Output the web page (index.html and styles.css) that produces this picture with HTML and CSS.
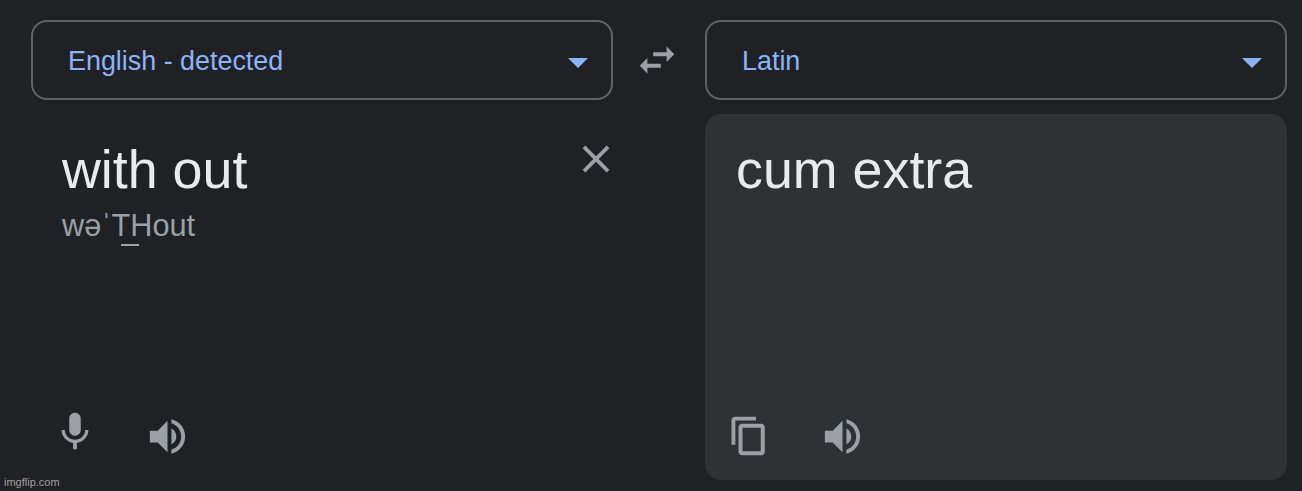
FILE: index.html
```html
<!DOCTYPE html>
<html lang="en">

<head>
    <meta charset="UTF-8">
    <meta name="viewport" content="width=device-width, initial-scale=1.0">
    <title>Translate</title>
    <link rel="stylesheet" href="styles.css">
</head>
<body>
    <main class="translator">
        <div class="languages">
            <div class="language">
                <span>English - detected</span>
                <svg class="caret" viewBox="0 0 20 10"><path d="M0 0h20L10 10z"/></svg>
            </div>
            <div class="swap">
                <svg class="icon" viewBox="0 0 24 24"><path d="M6.99 11L3 15l3.99 4v-3H14v-2H6.99v-3zM21 9l-3.99-4v3H10v2h7.01v3L21 9z"/></svg>
            </div>
            <div class="language">
                <span>Latin</span>
                <svg class="caret" viewBox="0 0 20 10"><path d="M0 0h20L10 10z"/></svg>
            </div>
        </div>
        <div class="panels">
            <section class="panel source">
                <div class="row">
                    <div class="text">with out</div>
                    <svg class="icon close" viewBox="0 0 24 24"><path d="M19 6.41L17.59 5 12 10.59 6.41 5 5 6.41 10.59 12 5 17.59 6.41 19 12 13.41 17.59 19 19 17.59 13.41 12z"/></svg>
                </div>
                <div class="phonetic">wəˈ<span class="digraph">TH</span>out</div>
                <div class="actions">
                    <svg class="icon mic" viewBox="0 0 24 24"><path d="M12 14c1.66 0 2.99-1.34 2.99-3L15 5c0-1.66-1.34-3-3-3S9 3.34 9 5v6c0 1.66 1.34 3 3 3zm5.3-3c0 3-2.54 5.1-5.3 5.1S6.7 14 6.7 11H5c0 3.41 2.72 6.23 6 6.72V21h2v-3.28c3.28-.48 6-3.3 6-6.72h-1.7z"/></svg>
                    <svg class="icon speaker" viewBox="0 0 24 24"><path d="M3 9v6h4l5 5V4L7 9H3zm13.5 3c0-1.77-1.02-3.29-2.5-4.03v8.05c1.48-.73 2.5-2.25 2.5-4.02zM14 3.23v2.06c2.89.86 5 3.54 5 6.71s-2.11 5.85-5 6.71v2.06c4.01-.91 7-4.49 7-8.77s-2.99-7.86-7-8.77z"/></svg>
                </div>
            </section>
            <section class="panel result">
                <div class="text">cum extra</div>
                <div class="actions">
                    <svg class="icon copy" viewBox="0 0 24 24"><path d="M16 1H4c-1.1 0-2 .9-2 2v14h2.2V3.2H16V1zm3 4H8c-1.1 0-2 .9-2 2v14c0 1.1.9 2 2 2h11c1.1 0 2-.9 2-2V7c0-1.1-.9-2-2-2zm-.3 15.7H8.3V7.3h10.4v13.4z"/></svg>
                    <svg class="icon speaker" viewBox="0 0 24 24"><path d="M3 9v6h4l5 5V4L7 9H3zm13.5 3c0-1.77-1.02-3.29-2.5-4.03v8.05c1.48-.73 2.5-2.25 2.5-4.02zM14 3.23v2.06c2.89.86 5 3.54 5 6.71s-2.11 5.85-5 6.71v2.06c4.01-.91 7-4.49 7-8.77s-2.99-7.86-7-8.77z"/></svg>
                </div>
            </section>
        </div>
    </main>
    <div class="watermark">imgflip.com</div>
</body>

</html>
```
FILE: styles.css
```css
* {
    box-sizing: border-box;
}

body {
    margin: 0;
    height: 491px;
    overflow: hidden;
    background-color: #202124;
    color: #e8eaed;
    font-family: "Liberation Sans", Arial, sans-serif;
}

.translator {
    padding: 20px 15px 0 31px;
}

.languages {
    display: flex;
}

.language {
    display: flex;
    justify-content: space-between;
    align-items: center;
    width: 582px;
    height: 80px;
    padding: 3px 23px 0 35px;
    border: 2px solid #5f6368;
    border-radius: 16px;
    color: #8ab4f8;
    font-size: 26.9px;
}

.caret {
    width: 20px;
    height: 10px;
    margin-top: 2px;
    fill: #8ab4f8;
}

.swap {
    display: flex;
    justify-content: center;
    width: 92px;
    padding: 17px 4px 0 0;
}

.icon {
    flex: none;
    width: 46px;
    height: 46px;
    fill: #9aa0a6;
}

.panels {
    display: flex;
    justify-content: space-between;
    margin-top: 14px;
}

.panel {
    display: flex;
    flex-direction: column;
    width: 582px;
    height: 366px;
    padding: 24px 0 20px 31px;
    border-radius: 16px;
}

.result {
    background-color: #303134;
}

.row {
    display: flex;
    justify-content: space-between;
}

.text {
    font-size: 53.8px;
    line-height: 62px;
}

.close {
    margin: -2px -6px 0 0;
}

.phonetic {
    margin-top: 9px;
    font-size: 30.7px;
    line-height: 34px;
    color: #9aa0a6;
}

.digraph {
    position: relative;
}

.digraph::after {
    content: "";
    position: absolute;
    left: 10px;
    bottom: -3px;
    width: 18px;
    height: 2px;
    background-color: #9aa0a6;
}

.actions {
    display: flex;
    margin-top: auto;
}

.mic {
    margin: -4px 46px 0 -10px;
}

.speaker {
    width: 47px;
    height: 47px;
}

.copy {
    width: 42px;
    height: 42px;
    margin: 2px 49px 0 -8px;
}

.watermark {
    position: absolute;
    left: 4px;
    bottom: 2px;
    font-size: 11px;
    line-height: 13px;
    color: #a0a0a2;
}
```
